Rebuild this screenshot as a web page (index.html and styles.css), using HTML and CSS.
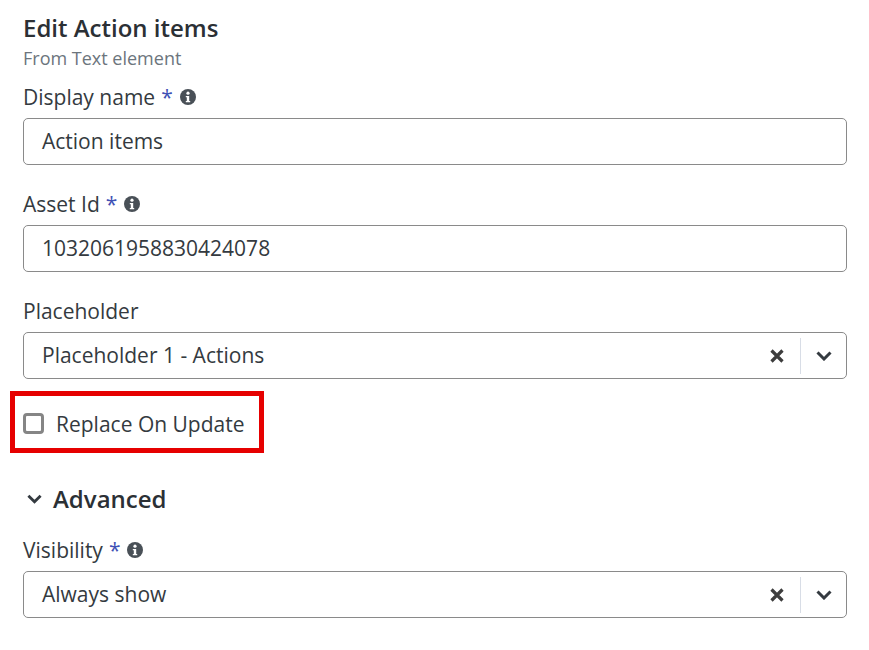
FILE: index.html
```html
<!DOCTYPE html>
<html lang="en">
<head>
  <meta charset="UTF-8">
  <title>Edit Action items</title>
  <link rel="stylesheet" href="styles.css">
</head>
<body>
  <div class="panel">
    <h2 class="title">Edit Action items</h2>
    <div class="subtitle">From Text element</div>

    <div class="field first">
      <div class="field-label">Display name <span class="req">*</span>
        <svg class="info" viewBox="0 0 16 16"><circle cx="8" cy="8" r="8"/><circle cx="8" cy="4.2" r="1.6" fill="#fff"/><path d="M5.8 6.9h3.4v5h1v1.4H5.8v-1.4h1v-3.6h-1z" fill="#fff"/></svg>
      </div>
      <div class="box">Action items</div>
    </div>

    <div class="field">
      <div class="field-label">Asset Id <span class="req">*</span>
        <svg class="info" viewBox="0 0 16 16"><circle cx="8" cy="8" r="8"/><circle cx="8" cy="4.2" r="1.6" fill="#fff"/><path d="M5.8 6.9h3.4v5h1v1.4H5.8v-1.4h1v-3.6h-1z" fill="#fff"/></svg>
      </div>
      <div class="box">1032061958830424078</div>
    </div>

    <div class="field">
      <div class="field-label">Placeholder</div>
      <div class="box select">
        <span class="value">Placeholder 1 - Actions</span>
        <svg class="clear" viewBox="0 0 14 14"><path d="M1.5 1.5l11 11M12.5 1.5l-11 11"/></svg>
        <span class="divider"></span>
        <svg class="caret" viewBox="0 0 16 10"><path d="M1.5 1.5l6.5 6.5 6.5-6.5"/></svg>
      </div>
    </div>

    <label class="check-row">
      <span class="check"></span>
      Replace On Update
    </label>

    <div class="advanced">
      <svg class="caret small" viewBox="0 0 16 10"><path d="M1.5 1.5l6.5 6.5 6.5-6.5"/></svg>
      Advanced
    </div>

    <div class="field vis">
      <div class="field-label">Visibility <span class="req">*</span>
        <svg class="info" viewBox="0 0 16 16"><circle cx="8" cy="8" r="8"/><circle cx="8" cy="4.2" r="1.6" fill="#fff"/><path d="M5.8 6.9h3.4v5h1v1.4H5.8v-1.4h1v-3.6h-1z" fill="#fff"/></svg>
      </div>
      <div class="box select">
        <span class="value">Always show</span>
        <svg class="clear" viewBox="0 0 14 14"><path d="M1.5 1.5l11 11M12.5 1.5l-11 11"/></svg>
        <span class="divider"></span>
        <svg class="caret" viewBox="0 0 16 10"><path d="M1.5 1.5l6.5 6.5 6.5-6.5"/></svg>
      </div>
    </div>
  </div>
</body>
</html>
```

FILE: styles.css
```css
* { box-sizing: border-box; margin: 0; padding: 0; }
body { font-family: "Open Sans", "Noto Sans", sans-serif; background: #fff; color: #343a40; }
.panel { width: 869px; padding: 11px 22px 0 23px; }
.title { font-size: 24px; line-height: 33px; font-weight: 600; color: #2b3035; }
.subtitle { font-size: 18px; line-height: 26px; margin-top: 1px; color: #6c757d; }
.field { margin-top: 25px; }
.field.first { margin-top: 12px; }
.field-label { font-size: 21px; line-height: 27px; height: 27px; margin-bottom: 8px; padding-top: 2px; display: flex; align-items: center; gap: 6px; }
.req { color: #3f51b5; }
.info { width: 16px; height: 16px; fill: #495057; margin: -2px 0 0 1px; }
.box { height: 47px; border: 1px solid #8a8a8a; border-radius: 5px; padding: 0 18px; font-size: 21px; line-height: 45px; display: flex; align-items: center; }
.select { padding-right: 14px; }
.value { flex: 1; }
.clear { width: 14px; height: 14px; margin-right: -1px; fill: none; stroke: #3d3d3d; stroke-width: 3.2; }
.divider { width: 1px; height: 36px; background: #d8dde6; margin: 0 15px 0 17px; }
.caret { width: 16px; height: 10px; fill: none; stroke: #343a40; stroke-width: 3; }
.check-row { display: flex; align-items: center; gap: 12px; width: 254px; height: 62px; margin: 12px 0 0 -13px; border: 5px solid #e60000; padding: 3px 0 0 8px; font-size: 21px; }
.check { width: 21px; height: 21px; margin-top: -1px; border: 3px solid #858585; border-radius: 4px; background: #fff; }
.advanced { display: flex; align-items: center; gap: 11px; margin-top: 29px; padding-left: 4px; font-size: 24px; line-height: 34px; font-weight: 600; color: #2b3035; }
.small { width: 15px; height: 10px; }
.vis { margin-top: 20px; }
```
